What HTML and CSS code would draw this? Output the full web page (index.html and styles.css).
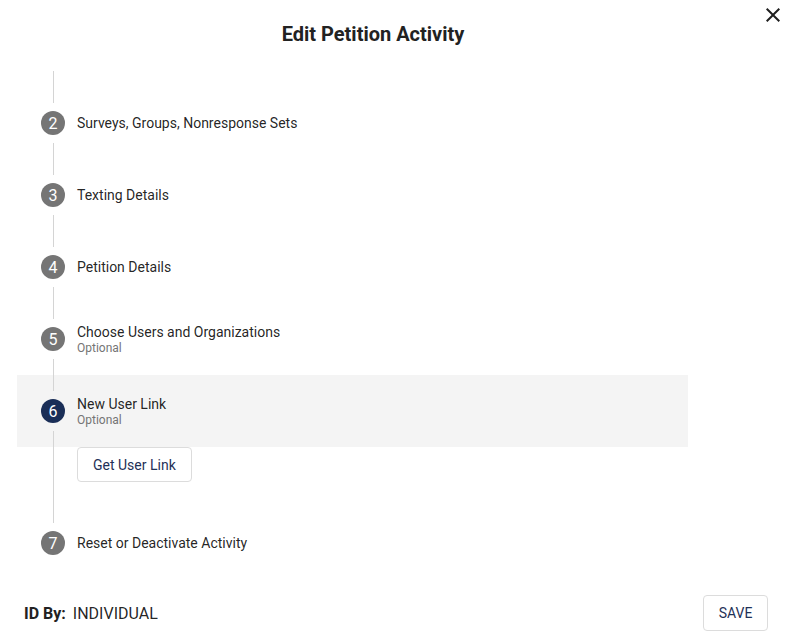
FILE: index.html
```html
<!DOCTYPE html>
<html>
<head>
<meta charset="utf-8">
<link rel="stylesheet" href="styles.css">
</head>
<body>
<div class="dialog">
  <div class="header">
    <h1 class="title">Edit Petition Activity</h1>
    <div class="close">
      <svg width="24" height="24" viewBox="0 0 24 24"><path d="M19 6.41 17.59 5 12 10.59 6.41 5 5 6.41 10.59 12 5 17.59 6.41 19 12 13.41 17.59 19 19 17.59 13.41 12z" fill="#1f1f1f"/></svg>
    </div>
  </div>
  <div class="stepper">
    <div class="line h32"></div>
    <div class="step"><span class="icon">2</span><div class="label"><div class="name">Surveys, Groups, Nonresponse Sets</div></div></div>
    <div class="line h32"></div>
    <div class="step"><span class="icon">3</span><div class="label"><div class="name">Texting Details</div></div></div>
    <div class="line h32"></div>
    <div class="step"><span class="icon">4</span><div class="label"><div class="name">Petition Details</div></div></div>
    <div class="line h32"></div>
    <div class="step"><span class="icon">5</span><div class="label"><div class="name">Choose Users and Organizations</div><div class="opt">Optional</div></div></div>
    <div class="line h16"></div>
    <div class="active">
      <div class="line h16"></div>
      <div class="step"><span class="icon navy">6</span><div class="label"><div class="name">New User Link</div><div class="opt">Optional</div></div></div>
      <div class="line h16"></div>
    </div>
    <div class="line content"><button class="btn">Get User Link</button></div>
    <div class="step"><span class="icon">7</span><div class="label"><div class="name">Reset or Deactivate Activity</div></div></div>
  </div>
  <div class="footer">
    <div class="idby"><b>ID By:</b><span>INDIVIDUAL</span></div>
    <button class="btn save">SAVE</button>
  </div>
</div>
</body>
</html>
```
FILE: styles.css
```css
* { box-sizing: border-box; }
html, body { margin: 0; padding: 0; background: #fff; }
body { font-family: Roboto, "Liberation Sans", sans-serif; color: rgba(0,0,0,0.87); }
.dialog { width: 792px; height: 639px; display: flex; flex-direction: column; }
.header { height: 71px; display: flex; align-items: flex-start; }
.title { flex: 1; margin: 0; padding-top: 18px; text-align: center; font-size: 20px; line-height: 32px; font-weight: 700; color: #222; }
.close { width: 46px; display: flex; justify-content: flex-end; padding: 3px 7px 0 0; }
.close svg { display: block; }
.stepper { margin-left: 17px; width: 671px; display: flex; flex-direction: column; }
.line { margin-left: 36px; border-left: 1px solid #d4d4d4; }
.h32 { height: 32px; }
.h16 { height: 16px; }
.active { background: #f4f4f4; }
.step { height: 40px; display: flex; align-items: center; padding-left: 24px; gap: 12px; }
.icon { width: 24px; height: 24px; border-radius: 50%; background: #757575; color: #fff; font-size: 16px; display: flex; align-items: center; justify-content: center; flex: none; }
.icon.navy { background: #1a2e57; }
.label { display: flex; flex-direction: column; }
.name { font-size: 14px; line-height: 17px; }
.opt { font-size: 12px; line-height: 14px; color: #757575; }
.content { height: 76px; padding-left: 23px; }
.btn { font-family: Roboto, "Liberation Sans", sans-serif; font-size: 14px; color: #1f3157; background: #fff; border: 1px solid #dcdcdc; border-radius: 4px; height: 35px; padding: 0 15px; cursor: pointer; }
.footer { margin-top: auto; display: flex; justify-content: space-between; align-items: center; padding: 0 24px 8px 24px; }
.idby { display: flex; gap: 7px; font-size: 16px; }
.idby b { font-weight: 700; color: #222; }
.save { height: 36px; width: 65px; padding: 0; }
```
